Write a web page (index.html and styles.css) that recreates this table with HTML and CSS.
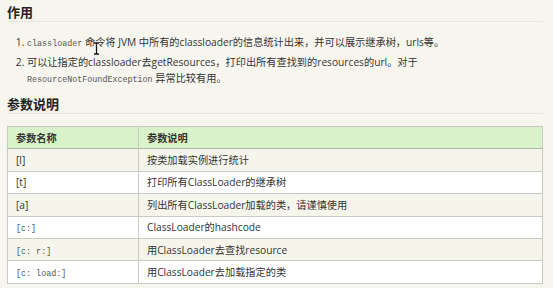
FILE: index.html
```html
<!DOCTYPE html>
<html lang="zh">
<head>
<meta charset="utf-8">
<link rel="stylesheet" href="styles.css">
</head>
<body>
<div class="page">
  <h2 class="heading first">作用</h2>
  <ol class="usage">
    <li><code>classloader</code> 命令将 JVM 中所有的classloader的信息统计出来，并可以展示继承树，urls等。</li>
    <li>可以让指定的classloader去getResources，打印出所有查找到的resources的url。对于<br><code>ResourceNotFoundException</code> 异常比较有用。</li>
  </ol>
  <h2 class="heading">参数说明</h2>
  <table class="params">
    <thead>
      <tr><th class="c1">参数名称</th><th>参数说明</th></tr>
    </thead>
    <tbody>
      <tr><td>[l]</td><td>按类加载实例进行统计</td></tr>
      <tr><td>[t]</td><td>打印所有ClassLoader的继承树</td></tr>
      <tr><td>[a]</td><td>列出所有ClassLoader加载的类，请谨慎使用</td></tr>
      <tr><td><code>[c:]</code></td><td>ClassLoader的hashcode</td></tr>
      <tr><td><code>[c: r:]</code></td><td>用ClassLoader去查找resource</td></tr>
      <tr><td><code>[c: load:]</code></td><td>用ClassLoader去加载指定的类</td></tr>
    </tbody>
  </table>
  <svg class="cursor" width="7" height="13" viewBox="0 0 7 13">
    <path d="M1 1 H6 M3.5 1 V12 M1 12 H6" stroke="#fff" stroke-width="3" fill="none"/>
    <path d="M1 1 H6 M3.5 1 V12 M1 12 H6" stroke="#111" stroke-width="1.3" fill="none"/>
  </svg>
</div>
</body>
</html>
```

FILE: styles.css
```css
html, body {
  margin: 0;
  padding: 0;
  background: #f7f6ee;
}
.page {
  position: relative;
  padding: 0 10px 0 7px;
  font-family: "Open Sans", "Noto Sans CJK SC", sans-serif;
  font-size: 10.2px;
  color: #333;
}
.heading {
  margin: 0;
  font-size: 13px;
  line-height: 16px;
  font-weight: bold;
  color: #222;
  padding-bottom: 1px;
  border-bottom: 1px solid #e6e5dc;
}
.heading.first {
  padding-top: 4px;
}
.usage {
  margin: 12px 0 10px 0;
  padding-left: 20px;
  line-height: 16px;
}
.usage li {
  margin-bottom: 4px;
  padding-left: 0;
}
.usage li:last-child {
  margin-bottom: 0;
}
code {
  font-family: "Liberation Mono", "DejaVu Sans Mono", monospace;
  font-size: 8.4px;
  line-height: 1;
  color: #555;
}
.params {
  margin-top: 12px;
  width: 100%;
  border-collapse: collapse;
  border: 1px solid #a9ada2;
  line-height: 14px;
}
.params th, .params td {
  border: 1px solid #c9cbc2;
  height: 22.4px;
  padding: 0 8px;
  text-align: left;
  vertical-align: middle;
  box-sizing: border-box;
}
.params th {
  background: #daf2c9;
  font-weight: bold;
  color: #333;
  border-bottom-color: #b2b8aa;
}
.params .c1 {
  width: 131px;
}
.params tbody tr:nth-child(odd) td {
  background: #f6f5ec;
}
.params tbody tr:nth-child(even) td {
  background: #ffffff;
}
.cursor {
  position: absolute;
  left: 93px;
  top: 42px;
}
```
